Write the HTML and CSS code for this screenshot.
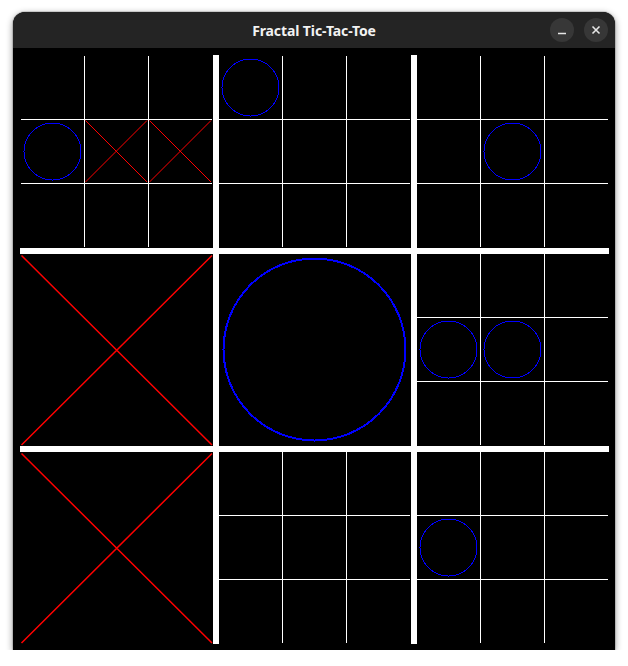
FILE: index.html
```html
<!DOCTYPE html>
<html>
<head>
<meta charset="utf-8">
<title>Fractal Tic-Tac-Toe</title>
<link rel="stylesheet" href="styles.css">
</head>
<body>
<div class="window">
  <div class="titlebar">
    <div></div>
    <div class="title">Fractal Tic-Tac-Toe</div>
    <div class="controls">
      <button class="ctl" aria-label="Minimize"><svg width="24" height="24" viewBox="0 0 24 24"><line x1="8" y1="15.5" x2="16" y2="15.5" stroke="#e6e6e6" stroke-width="1.6"/></svg></button>
      <button class="ctl" aria-label="Close"><svg width="24" height="24" viewBox="0 0 24 24"><path d="M8.5 8.5 L15.5 15.5 M15.5 8.5 L8.5 15.5" stroke="#e6e6e6" stroke-width="1.6" fill="none"/></svg></button>
    </div>
  </div>
  <div class="content">
    <div class="board">
      <!-- row 1 -->
      <div class="cell">
        <div class="sub first-col first-row">
          <div class="sc"></div><div class="sc"></div><div class="sc"></div>
          <div class="sc"><svg class="mark" viewBox="0 0 63 63"><circle cx="31.5" cy="31.5" r="28.5" class="o"/></svg></div>
          <div class="sc"><svg class="mark" viewBox="0 0 63 63"><path d="M0.5 0.5 L62 62 M62 0.5 L0.5 62" class="x"/></svg></div>
          <div class="sc"><svg class="mark" viewBox="0 0 63 63"><path d="M0.5 0.5 L62 62 M62 0.5 L0.5 62" class="x"/></svg></div>
          <div class="sc"></div><div class="sc"></div><div class="sc"></div>
        </div>
      </div>
      <div class="cell">
        <div class="sub first-row">
          <div class="sc"><svg class="mark" viewBox="0 0 63 63"><circle cx="31.5" cy="31.5" r="28.5" class="o"/></svg></div>
          <div class="sc"></div><div class="sc"></div>
          <div class="sc"></div><div class="sc"></div><div class="sc"></div>
          <div class="sc"></div><div class="sc"></div><div class="sc"></div>
        </div>
      </div>
      <div class="cell">
        <div class="sub first-row">
          <div class="sc"></div><div class="sc"></div><div class="sc"></div>
          <div class="sc"></div>
          <div class="sc"><svg class="mark" viewBox="0 0 63 63"><circle cx="31.5" cy="31.5" r="28.5" class="o"/></svg></div>
          <div class="sc"></div>
          <div class="sc"></div><div class="sc"></div><div class="sc"></div>
        </div>
      </div>
      <!-- row 2 -->
      <div class="cell">
        <svg class="big" viewBox="0 0 193 192"><path d="M1.5 1.5 L192 191 M192 1.5 L1.5 191" class="bx"/></svg>
      </div>
      <div class="cell">
        <svg class="big" viewBox="0 0 192 192"><circle cx="95.5" cy="95.5" r="91" class="bo"/></svg>
      </div>
      <div class="cell">
        <div class="sub">
          <div class="sc"></div><div class="sc"></div><div class="sc"></div>
          <div class="sc"><svg class="mark" viewBox="0 0 63 63"><circle cx="31.5" cy="31.5" r="28.5" class="o"/></svg></div>
          <div class="sc"><svg class="mark" viewBox="0 0 63 63"><circle cx="31.5" cy="31.5" r="28.5" class="o"/></svg></div>
          <div class="sc"></div>
          <div class="sc"></div><div class="sc"></div><div class="sc"></div>
        </div>
      </div>
      <!-- row 3 -->
      <div class="cell">
        <svg class="big" viewBox="0 0 193 192"><path d="M1.5 1.5 L192 191 M192 1.5 L1.5 191" class="bx"/></svg>
      </div>
      <div class="cell">
        <div class="sub">
          <div class="sc"></div><div class="sc"></div><div class="sc"></div>
          <div class="sc"></div><div class="sc"></div><div class="sc"></div>
          <div class="sc"></div><div class="sc"></div><div class="sc"></div>
        </div>
      </div>
      <div class="cell">
        <div class="sub">
          <div class="sc"></div><div class="sc"></div><div class="sc"></div>
          <div class="sc"><svg class="mark" viewBox="0 0 63 63"><circle cx="31.5" cy="31.5" r="28.5" class="o"/></svg></div>
          <div class="sc"></div><div class="sc"></div>
          <div class="sc"></div><div class="sc"></div><div class="sc"></div>
        </div>
      </div>
    </div>
  </div>
</div>
</body>
</html>
```
FILE: styles.css
```css
html, body {
  margin: 0;
  padding: 0;
  background: #ffffff;
}

body {
  padding: 12px 0 0 13px;
}

.window {
  width: 602px;
  border-radius: 12px 12px 0 0;
  overflow: hidden;
  box-shadow: 0 2px 7px rgba(0, 0, 0, 0.45), 0 0 0 1px rgba(0, 0, 0, 0.12);
  background: #000;
}

.titlebar {
  height: 36px;
  background: #242424;
  display: grid;
  grid-template-columns: 1fr auto 1fr;
  align-items: center;
}

.title {
  font-family: "Noto Sans", "DejaVu Sans", sans-serif;
  font-weight: 700;
  font-size: 14px;
  color: #f2f2f2;
  letter-spacing: -0.1px;
}

.controls {
  justify-self: end;
  display: flex;
  gap: 10px;
  padding-right: 7px;
}

.ctl {
  width: 24px;
  height: 24px;
  padding: 0;
  border: none;
  border-radius: 50%;
  background: #373737;
  display: flex;
  align-items: center;
  justify-content: center;
}

.ctl svg {
  display: block;
}

.content {
  height: 602px;
  background: #000;
  padding: 7px;
  box-sizing: border-box;
}

.board {
  display: grid;
  grid-template-columns: 193px 192px 192px;
  grid-template-rows: 193px 192px 192px;
  gap: 6px;
  background: #fff;
  width: fit-content;
}

.cell {
  background: #000;
  overflow: hidden;
}

.sub {
  display: grid;
  grid-template-columns: repeat(3, 63px);
  grid-template-rows: repeat(3, 63px);
  gap: 1px;
  background: #fff;
  width: fit-content;
}

.sub.first-col {
  margin-left: 1px;
}

.sub.first-row {
  margin-top: 1px;
}

.sc {
  background: #000;
}

.mark {
  display: block;
  width: 63px;
  height: 63px;
}

.big {
  display: block;
  width: 100%;
  height: 100%;
}

.o,
.x,
.bx,
.bo {
  fill: none;
}

.o,
.bo {
  shape-rendering: crispEdges;
}

.o {
  stroke: #0000ff;
  stroke-width: 1;
}

.x {
  stroke: #ff0000;
  stroke-width: 1;
}

.bx {
  stroke: #ff0000;
  stroke-width: 1.5;
}

.bo {
  stroke: #0000ff;
  stroke-width: 2;
}
```
